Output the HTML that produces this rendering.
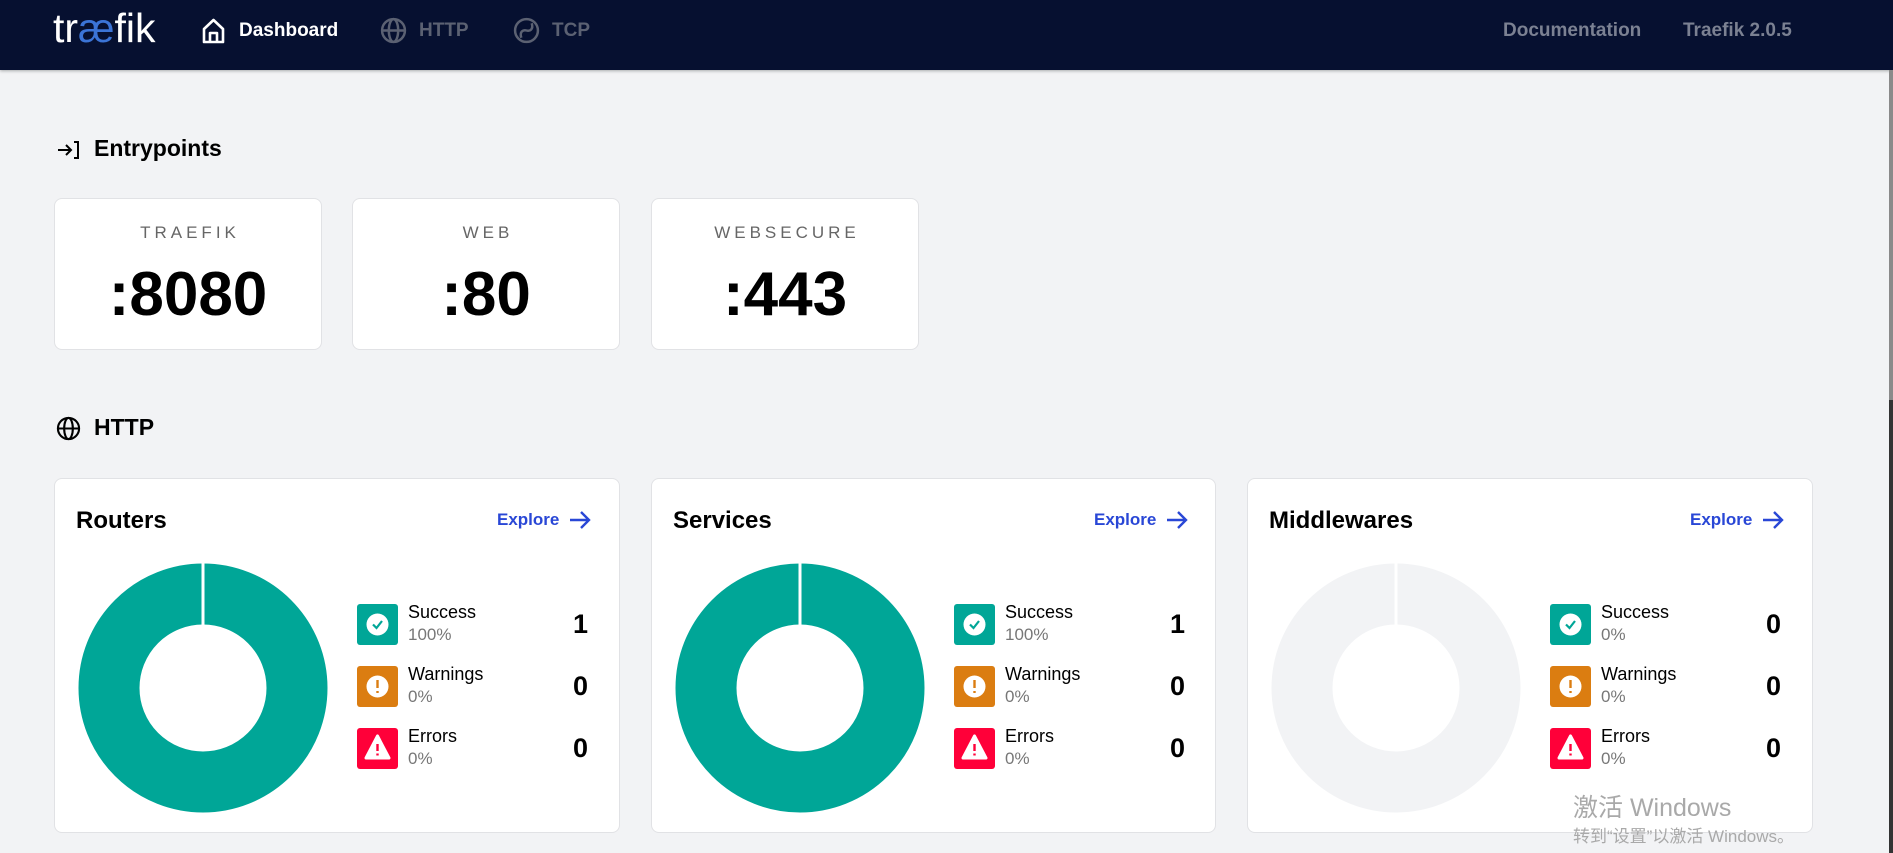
<!DOCTYPE html>
<html><head><meta charset="utf-8"><style>
*{margin:0;padding:0;box-sizing:border-box}
body{width:1893px;height:853px;overflow:hidden;background:#f2f3f5;font-family:"Liberation Sans","Noto Sans CJK SC",sans-serif;position:relative;color:#000}
.nav{position:absolute;left:0;top:0;width:1893px;height:70px;background:#061030;box-shadow:0 1px 3px rgba(0,0,0,.3)}
.a{position:absolute}
.navt{position:absolute;top:20px;font-size:19px;font-weight:bold;color:#7b8192}
.card{position:absolute;background:#fff;border:1px solid #e1e2e5;border-radius:8px}
.ep .lbl{position:absolute;top:24px;width:100%;text-align:center;font-size:17px;letter-spacing:4px;color:#666;padding-left:4px}
.ep .val{position:absolute;top:60px;width:100%;text-align:center;font-size:62px;font-weight:bold}
.h{position:absolute;font-size:23px;font-weight:bold;left:94px}
.title{position:absolute;left:21px;top:28px;font-size:24px;font-weight:bold}
.exp{position:absolute;left:442px;top:31px;font-size:17px;color:#2947d6;font-weight:bold}
.ic{position:absolute;left:302px;width:41px;height:41px;border-radius:3px}
.ln{position:absolute;left:353px;font-size:18px}
.pc{position:absolute;left:353px;font-size:17px;color:#777}
.cnt{position:absolute;left:503px;font-size:27px;font-weight:bold;width:30px;text-align:right}
</style></head><body>
<div class="nav">
<div class="a" style="left:53px;top:5px;font-size:41px;color:#fff">tr<span style="color:#3b74d6">æ</span>fik</div>
<svg class="a" style="left:201px;top:17px" width="25" height="27" viewBox="0 0 25 27"><path d="M3 12 L12.5 3 L22 12 V25 H3 Z M9 25 V16 H16 V25" fill="none" stroke="#fff" stroke-width="2.6" stroke-linejoin="round"/></svg>
<div class="navt" style="left:239px;color:#fff">Dashboard</div>
<svg class="a" style="left:380px;top:17px" width="27" height="27" viewBox="0 0 26 26"><g fill="none" stroke="#5b6172" stroke-width="2.4"><circle cx="13" cy="13" r="11"/><ellipse cx="13" cy="13" rx="4.5" ry="11"/><path d="M2 13H24"/></g></svg>
<div class="navt" style="left:419px;color:#5b6172">HTTP</div>
<svg class="a" style="left:513px;top:17px" width="27" height="27" viewBox="0 0 26 26"><g fill="none" stroke="#5b6172" stroke-width="2.4"><circle cx="13" cy="13" r="11"/><path d="M8 20 C6 14 10 12 13 13 C16 14 20 12 18 6"/></g></svg>
<div class="navt" style="left:552px;color:#5b6172">TCP</div>
<div class="navt" style="left:1503px">Documentation</div>
<div class="navt" style="left:1683px">Traefik 2.0.5</div>
</div>
<div class="a" style="left:1889px;top:70px;width:4px;height:330px;background:#8a8a8a"></div>
<div class="a" style="left:1889px;top:400px;width:4px;height:453px;background:#333"></div>

<svg class="a" style="left:57px;top:140px" width="24" height="20" viewBox="0 0 24 20"><g fill="none" stroke="#000" stroke-width="2"><path d="M1 10H13M9 5L14 10L9 15M17 2H21V18H17"/></g></svg>
<div class="h" style="top:135px">Entrypoints</div>

<div class="card ep" style="left:54px;top:198px;width:268px;height:152px"><div class="lbl">TRAEFIK</div><div class="val">:8080</div></div>
<div class="card ep" style="left:352px;top:198px;width:268px;height:152px"><div class="lbl">WEB</div><div class="val">:80</div></div>
<div class="card ep" style="left:651px;top:198px;width:268px;height:152px"><div class="lbl">WEBSECURE</div><div class="val">:443</div></div>

<svg class="a" style="left:56px;top:416px" width="25" height="25" viewBox="0 0 26 26"><g fill="none" stroke="#000" stroke-width="2.2"><circle cx="13" cy="13" r="11"/><ellipse cx="13" cy="13" rx="4.5" ry="11"/><path d="M2 13H24"/></g></svg>
<div class="h" style="top:414px">HTTP</div>

<div class="card" style="left:54px;top:478px;width:566px;height:355px">
<div class="title">Routers</div>
<div class="exp">Explore</div>
<svg class="a" style="left:513px;top:30px" width="24" height="22" viewBox="0 0 24 22"><path d="M2 11H21M13 3L21 11L13 19" fill="none" stroke="#2947d6" stroke-width="2.4"/></svg>
<svg class="a" style="left:23px;top:84px" width="250" height="250" viewBox="0 0 250 250"><circle cx="125" cy="125" r="94" fill="none" stroke="#00a697" stroke-width="61"/><rect x="123.5" y="0" width="3" height="64" fill="#fff"/></svg>
<div class="ic" style="top:125px;background:#00a697"><svg width="41" height="41"><circle cx="20.5" cy="20.5" r="11" fill="#fff"/><path d="M16 20.5L19.5 24L25 17" fill="none" stroke="#00a697" stroke-width="2.2"/></svg></div>
<div class="ln" style="top:123px">Success</div><div class="pc" style="top:146px">100%</div><div class="cnt" style="top:130px">1</div>
<div class="ic" style="top:187px;background:#db7d11"><svg width="41" height="41"><circle cx="20.5" cy="20.5" r="11" fill="#fff"/><path d="M20.5 14V22M20.5 25V27" stroke="#db7d11" stroke-width="2.4"/></svg></div>
<div class="ln" style="top:185px">Warnings</div><div class="pc" style="top:208px">0%</div><div class="cnt" style="top:192px">0</div>
<div class="ic" style="top:249px;background:#ff0039"><svg width="41" height="41"><path d="M20.5 8L32 30H9Z" fill="#fff" stroke="#fff" stroke-width="3" stroke-linejoin="round"/><path d="M20.5 16V23M20.5 25.5V27.5" stroke="#ff0039" stroke-width="2.4"/></svg></div>
<div class="ln" style="top:247px">Errors</div><div class="pc" style="top:270px">0%</div><div class="cnt" style="top:254px">0</div>
</div>

<div class="card" style="left:651px;top:478px;width:565px;height:355px">
<div class="title">Services</div>
<div class="exp">Explore</div>
<svg class="a" style="left:513px;top:30px" width="24" height="22" viewBox="0 0 24 22"><path d="M2 11H21M13 3L21 11L13 19" fill="none" stroke="#2947d6" stroke-width="2.4"/></svg>
<svg class="a" style="left:23px;top:84px" width="250" height="250" viewBox="0 0 250 250"><circle cx="125" cy="125" r="94" fill="none" stroke="#00a697" stroke-width="61"/><rect x="123.5" y="0" width="3" height="64" fill="#fff"/></svg>
<div class="ic" style="top:125px;background:#00a697"><svg width="41" height="41"><circle cx="20.5" cy="20.5" r="11" fill="#fff"/><path d="M16 20.5L19.5 24L25 17" fill="none" stroke="#00a697" stroke-width="2.2"/></svg></div>
<div class="ln" style="top:123px">Success</div><div class="pc" style="top:146px">100%</div><div class="cnt" style="top:130px">1</div>
<div class="ic" style="top:187px;background:#db7d11"><svg width="41" height="41"><circle cx="20.5" cy="20.5" r="11" fill="#fff"/><path d="M20.5 14V22M20.5 25V27" stroke="#db7d11" stroke-width="2.4"/></svg></div>
<div class="ln" style="top:185px">Warnings</div><div class="pc" style="top:208px">0%</div><div class="cnt" style="top:192px">0</div>
<div class="ic" style="top:249px;background:#ff0039"><svg width="41" height="41"><path d="M20.5 8L32 30H9Z" fill="#fff" stroke="#fff" stroke-width="3" stroke-linejoin="round"/><path d="M20.5 16V23M20.5 25.5V27.5" stroke="#ff0039" stroke-width="2.4"/></svg></div>
<div class="ln" style="top:247px">Errors</div><div class="pc" style="top:270px">0%</div><div class="cnt" style="top:254px">0</div>
</div>

<div class="card" style="left:1247px;top:478px;width:566px;height:355px">
<div class="title">Middlewares</div>
<div class="exp">Explore</div>
<svg class="a" style="left:513px;top:30px" width="24" height="22" viewBox="0 0 24 22"><path d="M2 11H21M13 3L21 11L13 19" fill="none" stroke="#2947d6" stroke-width="2.4"/></svg>
<svg class="a" style="left:23px;top:84px" width="250" height="250" viewBox="0 0 250 250"><circle cx="125" cy="125" r="94" fill="none" stroke="#f2f3f5" stroke-width="61"/><rect x="123.5" y="0" width="3" height="64" fill="#fff"/></svg>
<div class="ic" style="top:125px;background:#00a697"><svg width="41" height="41"><circle cx="20.5" cy="20.5" r="11" fill="#fff"/><path d="M16 20.5L19.5 24L25 17" fill="none" stroke="#00a697" stroke-width="2.2"/></svg></div>
<div class="ln" style="top:123px">Success</div><div class="pc" style="top:146px">0%</div><div class="cnt" style="top:130px">0</div>
<div class="ic" style="top:187px;background:#db7d11"><svg width="41" height="41"><circle cx="20.5" cy="20.5" r="11" fill="#fff"/><path d="M20.5 14V22M20.5 25V27" stroke="#db7d11" stroke-width="2.4"/></svg></div>
<div class="ln" style="top:185px">Warnings</div><div class="pc" style="top:208px">0%</div><div class="cnt" style="top:192px">0</div>
<div class="ic" style="top:249px;background:#ff0039"><svg width="41" height="41"><path d="M20.5 8L32 30H9Z" fill="#fff" stroke="#fff" stroke-width="3" stroke-linejoin="round"/><path d="M20.5 16V23M20.5 25.5V27.5" stroke="#ff0039" stroke-width="2.4"/></svg></div>
<div class="ln" style="top:247px">Errors</div><div class="pc" style="top:270px">0%</div><div class="cnt" style="top:254px">0</div>
</div>

<div class="a" style="left:1573px;top:788px;font-size:25px;color:#a9a9a9">激活 Windows</div>
<div class="a" style="left:1573px;top:822px;font-size:17px;color:#a9a9a9">转到“设置”以激活 Windows。</div>
</body></html>
